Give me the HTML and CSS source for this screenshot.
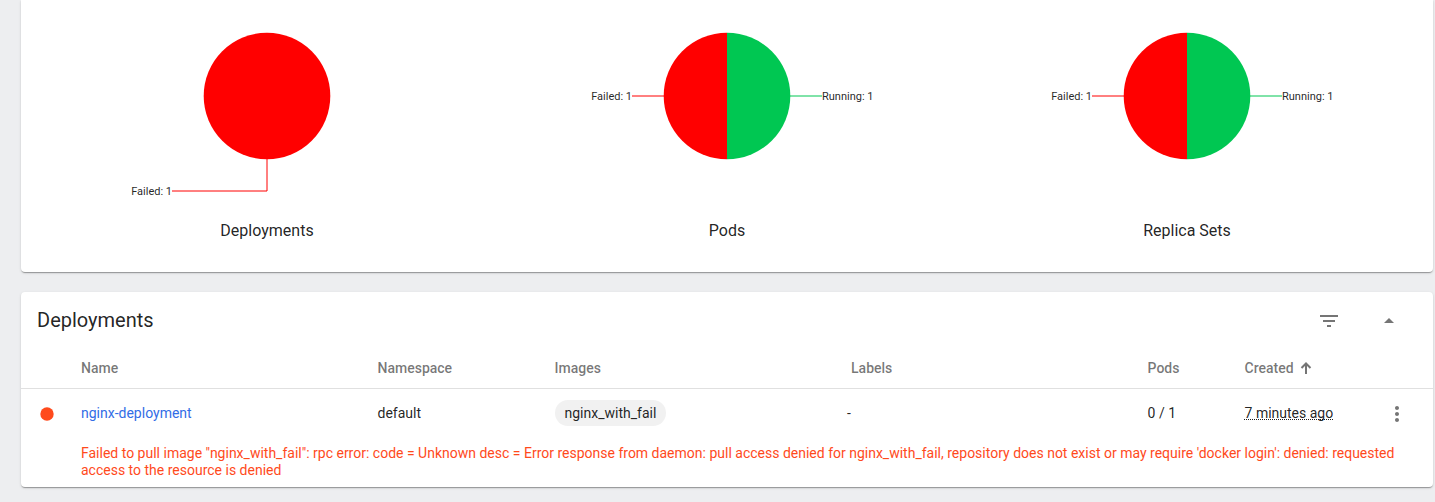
FILE: index.html
```html
<!DOCTYPE html>
<html lang="en">
<head>
<meta charset="utf-8">
<title>Workloads</title>
<link rel="stylesheet" href="styles.css">
</head>
<body>
<main class="content">
  <section class="card status-card" aria-label="Workload status">
    <figure class="chart">
      <svg class="pie" viewBox="0 0 300 212">
        <circle class="failed" cx="150" cy="96" r="63.3"/>
        <path class="line failed-line" d="M150 159V191H55"/>
        <text class="pie-label label-start" x="55" y="195">Failed: 1</text>
      </svg>
      <figcaption class="chart-title">Deployments</figcaption>
    </figure>
    <figure class="chart">
      <svg class="pie" viewBox="0 0 300 212">
        <path class="failed" d="M150 159.3a63.3 63.3 0 0 1 0-126.6z"/>
        <path class="running" d="M150 32.7a63.3 63.3 0 0 1 0 126.6z"/>
        <path class="line failed-line" d="M87 96H55"/>
        <path class="line running-line" d="M213 96H245"/>
        <text class="pie-label label-start" x="55" y="100">Failed: 1</text>
        <text class="pie-label" x="245" y="100">Running: 1</text>
      </svg>
      <figcaption class="chart-title">Pods</figcaption>
    </figure>
    <figure class="chart">
      <svg class="pie" viewBox="0 0 300 212">
        <path class="failed" d="M150 159.3a63.3 63.3 0 0 1 0-126.6z"/>
        <path class="running" d="M150 32.7a63.3 63.3 0 0 1 0 126.6z"/>
        <path class="line failed-line" d="M87 96H55"/>
        <path class="line running-line" d="M213 96H245"/>
        <text class="pie-label label-start" x="55" y="100">Failed: 1</text>
        <text class="pie-label" x="245" y="100">Running: 1</text>
      </svg>
      <figcaption class="chart-title">Replica Sets</figcaption>
    </figure>
  </section>

  <section class="card">
    <header class="card-header">
      <h2 class="card-title">Deployments</h2>
      <div class="actions">
        <button class="icon-button" type="button" aria-label="Filter">
          <svg class="icon" viewBox="0 0 24 24"><path d="M10 18h4v-2h-4v2zM3 6v2h18V6H3zm3 7h12v-2H6v2z"/></svg>
        </button>
        <button class="icon-button" type="button" aria-label="Collapse">
          <svg class="icon" viewBox="0 0 24 24"><path d="M7 14l5-5 5 5z"/></svg>
        </button>
      </div>
    </header>
    <table class="list">
      <colgroup>
        <col class="col-status"><col class="col-wide"><col class="col-namespace"><col class="col-wide"><col class="col-wide"><col class="col-pods"><col><col class="col-menu">
      </colgroup>
      <thead>
        <tr>
          <th></th>
          <th>Name</th>
          <th>Namespace</th>
          <th>Images</th>
          <th>Labels</th>
          <th>Pods</th>
          <th aria-sort="ascending"><span class="sorted">Created
            <svg class="sort-arrow" viewBox="0 0 12 12"><path d="M6 12V1.500M1.500 6L6 1.500L10.500 6"/></svg></span></th>
          <th></th>
        </tr>
      </thead>
      <tbody>
        <tr class="item">
          <td class="status"><svg class="dot" viewBox="0 0 14 14" role="img" aria-label="Failed"><circle cx="7" cy="7" r="6.700"/></svg></td>
          <td><a class="link" href="#nginx-deployment">nginx-deployment</a></td>
          <td>default</td>
          <td><span class="chip">nginx_with_fail</span></td>
          <td class="empty">-</td>
          <td>0 / 1</td>
          <td><span class="age">7 minutes ago</span></td>
          <td class="menu">
            <button class="icon-button" type="button" aria-label="Actions">
              <svg class="icon" viewBox="0 0 24 24"><path d="M12 8c1.100 0 2-.9 2-2s-.9-2-2-2-2 .9-2 2 .9 2 2 2zm0 2c-1.100 0-2 .9-2 2s.9 2 2 2 2-.9 2-2-.9-2-2-2zm0 6c-1.100 0-2 .9-2 2s.9 2 2 2 2-.9 2-2-.9-2-2-2z"/></svg>
            </button>
          </td>
        </tr>
        <tr>
          <td></td>
          <td class="error" colspan="7">Failed to pull image "nginx_with_fail": rpc error: code = Unknown desc = Error response from daemon: pull access denied for nginx_with_fail, repository does not exist or may require 'docker login': denied: requested access to the resource is denied</td>
        </tr>
      </tbody>
    </table>
  </section>
</main>
</body>
</html>
```

FILE: styles.css
```css
* {
  box-sizing: border-box;
}

body {
  margin: 0;
  background: #edeef0;
  color: rgba(0, 0, 0, 0.87);
  font: 14px/17px Roboto, "Liberation Sans", sans-serif;
}

.content {
  display: flex;
  flex-direction: column;
  gap: 20px;
  padding: 0 2px 15px 21px;
}

.card {
  background: #fff;
  border-radius: 4px;
  box-shadow: 0 2px 1px -1px rgba(0, 0, 0, 0.2), 0 1px 1px rgba(0, 0, 0, 0.14), 0 1px 3px rgba(0, 0, 0, 0.12);
}

.status-card {
  display: grid;
  grid-template-columns: repeat(3, 1fr);
  padding: 0 16px 22px;
  border-radius: 0 0 4px 4px;
}

.chart {
  display: flex;
  flex-direction: column;
  align-items: center;
  margin: 0;
}

.pie {
  width: 300px;
  height: 212px;
  overflow: visible;
}

.failed {
  fill: #f00;
}

.running {
  fill: #00c752;
}

.line {
  fill: none;
  stroke-width: 1px;
}

.failed-line {
  stroke: #f00;
}

.running-line {
  stroke: #00c752;
}

.pie-label {
  fill: rgba(0, 0, 0, 0.87);
  font-size: 11px;
}

.label-start {
  text-anchor: end;
}

.chart-title {
  font-size: 16px;
  line-height: 38px;
}

.card-header {
  display: flex;
  align-items: center;
  justify-content: space-between;
  height: 56px;
  padding: 0 24px 0 16px;
}

.card-title {
  margin: 0;
  font-size: 20px;
  font-weight: 400;
  line-height: 24px;
}

.actions {
  display: flex;
  gap: 20px;
  padding-top: 2px;
}

.icon-button {
  display: inline-flex;
  align-items: center;
  justify-content: center;
  width: 40px;
  height: 40px;
  padding: 0;
  border: 0;
  background: none;
  color: rgba(0, 0, 0, 0.54);
  cursor: pointer;
}

.icon {
  width: 24px;
  height: 24px;
  fill: currentColor;
}

.list {
  width: 100%;
  border-collapse: collapse;
  table-layout: fixed;
}

.col-status {
  width: 60px;
}

.col-wide {
  width: 21%;
}

.col-namespace {
  width: 177px;
}

.col-pods {
  width: 97px;
}

.col-menu {
  width: 56px;
}

th,
td {
  padding: 0;
  text-align: left;
}

th {
  height: 40px;
  padding-top: 1px;
  border-bottom: 1px solid #e0e0e0;
  color: rgba(0, 0, 0, 0.54);
  font-weight: 500;
}

.item td {
  height: 50px;
}

.item .status {
  padding: 2px 0 0 19px;
}

.dot {
  display: block;
  width: 14px;
  height: 14px;
  fill: #ff4a1c;
}

.link {
  color: #326de6;
  text-decoration: none;
}

.chip {
  display: inline-block;
  padding: 0 10px;
  border-radius: 13px;
  background: #f1f1f1;
  line-height: 26px;
}

.empty {
  text-indent: -4px;
}

.sorted {
  display: flex;
  align-items: center;
  gap: 6px;
}

.sort-arrow {
  width: 12px;
  height: 12px;
  fill: none;
  stroke: currentColor;
  stroke-width: 2px;
}

.age {
  text-decoration: underline dotted 1px;
  text-decoration-skip-ink: none;
  text-underline-offset: 1px;
}

.item .menu {
  padding: 2px 16px 0 0;
}

.error {
  padding: 7px 16px 8px 0;
  color: #ff4a1c;
}
```
